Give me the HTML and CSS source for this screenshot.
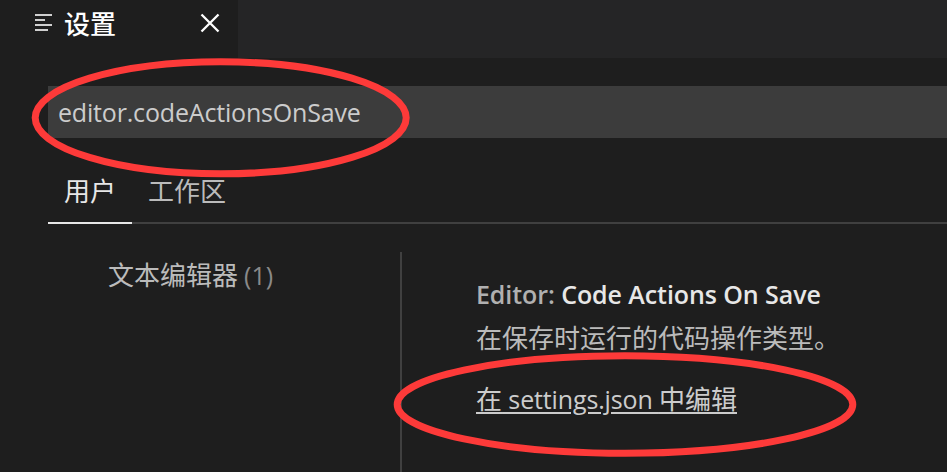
FILE: index.html
```html
<!DOCTYPE html>
<html lang="zh-CN">
<head>
<meta charset="utf-8">
<title>设置</title>
<link rel="stylesheet" href="styles.css">
</head>
<body>
<div class="window">
  <header class="tabbar">
    <div class="tab">
      <svg class="tab-icon" width="18" height="20" viewBox="0 0 18 20"><path d="M0 2H17M0 7H10M0 12H17M0 17H13" stroke="#d0d0d0" stroke-width="2"/></svg>
      <span class="tab-title">设置</span>
      <svg class="tab-close" width="20" height="20" viewBox="0 0 20 20"><path d="M1.5 1.5L18.5 18.5M18.5 1.5L1.5 18.5" stroke="#fff" stroke-width="2.3"/></svg>
    </div>
  </header>
  <div class="search"><span class="latin query">editor.codeActionsOnSave</span></div>
  <nav class="scopes">
    <div class="scope active">用户</div>
    <div class="scope">工作区</div>
  </nav>
  <main class="body">
    <aside class="toc">文本编辑器<span class="latin count">(1)</span></aside>
    <section class="setting">
      <h3 class="title latin"><span class="category">Editor: </span>Code Actions On Save</h3>
      <p class="description">在保存时运行的代码操作类型。</p>
      <a class="edit-link">在<span class="latin file"> settings.json </span>中编辑</a>
    </section>
  </main>
  <svg class="marks" width="947" height="472" viewBox="0 0 947 472">
    <ellipse cx="220.7" cy="117.8" rx="185.5" ry="56"/>
    <ellipse cx="625" cy="404.5" rx="227.8" ry="48.7"/>
  </svg>
</div>
</body>
</html>
```

FILE: styles.css
```css
* { box-sizing: border-box; }
body { margin: 0; background: #1e1e1e; }
.window {
  position: relative;
  width: 947px;
  height: 472px;
  overflow: hidden;
  display: flex;
  flex-direction: column;
  background: #1e1e1e;
  color: #bbb;
  font: 26px/38px "Noto Sans CJK SC", sans-serif;
  white-space: nowrap;
}
.latin { font-family: "Open Sans", "Noto Sans CJK SC", sans-serif; font-size: 25px; }
.tabbar { height: 58px; flex: none; background: #252526; }
.tab {
  width: 238px;
  height: 58px;
  padding: 0 18px 12px 35px;
  display: flex;
  align-items: center;
  background: #1e1e1e;
  color: #fff;
}
.tab-title { margin-left: 11px; font-weight: 500; }
.tab-close { margin-left: auto; }
.search {
  flex: none;
  height: 52px;
  margin: 28px 0 0 48px;
  padding: 7px 10px;
  background: #3c3c3c;
  color: #ccc;
}
.search .query { display: block; line-height: 38px; letter-spacing: -0.18px; }
.scopes {
  flex: none;
  display: flex;
  height: 60px;
  margin: 26px 0 0 48px;
  border-bottom: 2px solid #404040;
}
.scope { height: 60px; padding: 7px 16px 0; }
.scope.active { width: 84px; color: #e7e7e7; border-bottom: 2px solid #e7e7e7; }
.body { flex: 1; display: flex; padding-top: 28px; }
.toc { width: 400px; padding: 3px 0 0 108px; }
.count { margin-left: 6px; color: #8a8a8a; }
.setting { flex: 1; padding: 23px 0 0 74px; border-left: 2px solid #404040; }
.title { margin: 0; font-weight: 600; line-height: 38px; letter-spacing: -0.08px; color: #e7e7e7; }
.category { color: #b0b0b0; }
.description { margin: 5px 0 23px; }
.edit-link {
  color: #ccc;
  text-decoration: underline;
  text-decoration-thickness: 2px;
  text-underline-offset: 3px;
}
.file { white-space: pre; letter-spacing: -0.14px; }
.marks { position: absolute; left: 0; top: 0; fill: none; stroke: #fd3a39; stroke-width: 7; }
```
